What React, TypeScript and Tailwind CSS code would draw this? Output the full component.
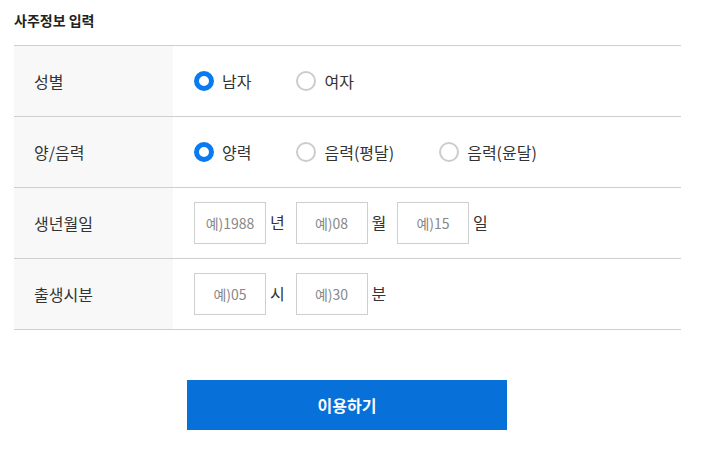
import { useState } from 'react'

const font = { fontFamily: '"Noto Sans CJK KR", "Noto Sans", sans-serif' }

function Radio({ checked, label, onClick }: { checked: boolean; label: string; onClick: () => void }) {
  return (
    <button type="button" onClick={onClick} className="flex items-center mr-[45px]">
      <span
        className={
          checked
            ? 'w-5 h-5 rounded-full border-[5px] border-[#0a7af0] bg-white'
            : 'w-5 h-5 rounded-full border-2 border-[#cccccc] bg-white'
        }
      />
      <span className="ml-[8px] text-[16px] text-[#333333]">{label}</span>
    </button>
  )
}

function Field({ placeholder, unit }: { placeholder: string; unit: string }) {
  return (
    <div className="flex items-center">
      <input
        placeholder={placeholder}
        className="w-[72px] h-[42px] border border-[#cfcfcf] text-center text-[14px] text-[#333333] placeholder:text-[#888888] outline-none"
      />
      <span className="ml-[4px] w-[25.5px] -mt-[3px] text-[16px] text-[#333333]">{unit}</span>
    </div>
  )
}

function Row({ label, children }: { label: string; children: React.ReactNode }) {
  return (
    <div className="flex h-[71px] border-b border-[#cfcfcf]">
      <div className="w-[159px] bg-[#f8f8f8] flex items-center pl-[20px] text-[16px] text-[#333333]">{label}</div>
      <div className="flex-1 flex items-center pl-[21px]">{children}</div>
    </div>
  )
}

export default function App() {
  const [gender, setGender] = useState('남자')
  const [cal, setCal] = useState('양력')

  return (
    <div className="bg-white w-[707px] h-[452px] px-[14px] pt-[10px]" style={font}>
      <h2 className="text-[14px] font-bold text-[#222222] h-[20px] leading-[20px]">사주정보 입력</h2>

      <div className="mt-[15px] border-t border-[#cfcfcf] w-[667px]">
        <Row label="성별">
          {['남자', '여자'].map((g) => (
            <Radio key={g} label={g} checked={gender === g} onClick={() => setGender(g)} />
          ))}
        </Row>
        <Row label="양/음력">
          {['양력', '음력(평달)', '음력(윤달)'].map((c) => (
            <Radio key={c} label={c} checked={cal === c} onClick={() => setCal(c)} />
          ))}
        </Row>
        <Row label="생년월일">
          <Field placeholder="예)1988" unit="년" />
          <Field placeholder="예)08" unit="월" />
          <Field placeholder="예)15" unit="일" />
        </Row>
        <Row label="출생시분">
          <Field placeholder="예)05" unit="시" />
          <Field placeholder="예)30" unit="분" />
        </Row>
      </div>

      <div className="flex justify-center mt-[50px] w-[666px]">
        <button className="w-[320px] h-[50px] bg-[#0770d9] text-white text-[16px] font-bold">
          이용하기
        </button>
      </div>
    </div>
  )
}
